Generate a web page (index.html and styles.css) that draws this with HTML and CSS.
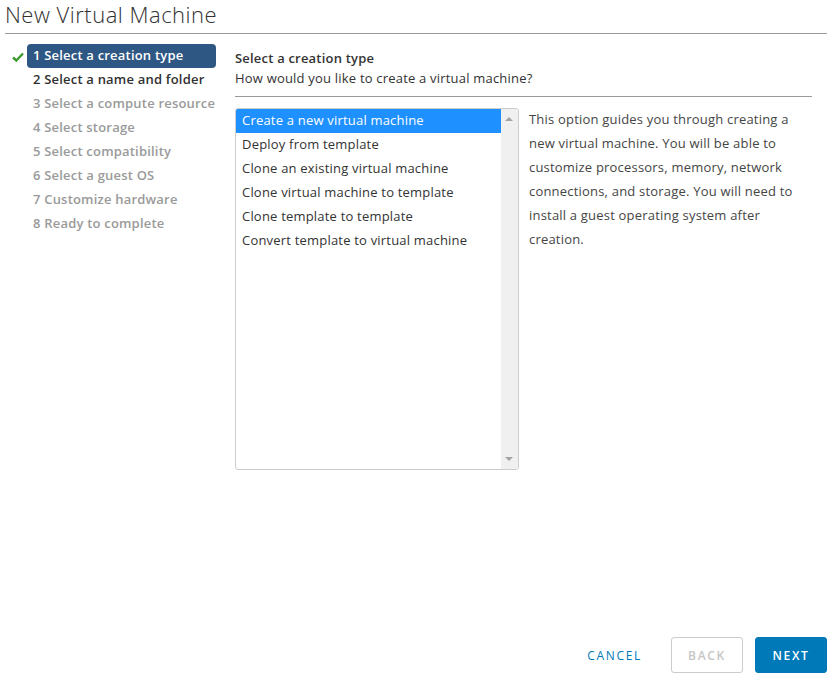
FILE: index.html
```html
<!DOCTYPE html>
<html>
<head>
<meta charset="utf-8">
<link rel="stylesheet" href="styles.css">
</head>
<body>
<div class="dialog">
  <h1 class="title">New Virtual Machine</h1>
  <div class="main">
    <ul class="steps">
      <li class="step done active"><span class="check"><svg width="12" height="10" viewBox="0 0 12 10"><path d="M1 5.5 L4.3 8.5 L11 1.5" fill="none" stroke="#3c9a2e" stroke-width="2.4"/></svg></span><span class="label">1 Select a creation type</span></li>
      <li class="step enabled"><span class="check"></span><span class="label">2 Select a name and folder</span></li>
      <li class="step"><span class="check"></span><span class="label">3 Select a compute resource</span></li>
      <li class="step"><span class="check"></span><span class="label">4 Select storage</span></li>
      <li class="step"><span class="check"></span><span class="label">5 Select compatibility</span></li>
      <li class="step"><span class="check"></span><span class="label">6 Select a guest OS</span></li>
      <li class="step"><span class="check"></span><span class="label">7 Customize hardware</span></li>
      <li class="step"><span class="check"></span><span class="label">8 Ready to complete</span></li>
    </ul>
    <div class="content">
      <div class="header">
        <div class="h-title">Select a creation type</div>
        <div class="h-sub">How would you like to create a virtual machine?</div>
      </div>
      <div class="body">
        <div class="listbox">
          <ul class="options">
            <li class="opt selected">Create a new virtual machine</li>
            <li class="opt">Deploy from template</li>
            <li class="opt">Clone an existing virtual machine</li>
            <li class="opt">Clone virtual machine to template</li>
            <li class="opt">Clone template to template</li>
            <li class="opt">Convert template to virtual machine</li>
          </ul>
          <div class="scrollbar">
            <span class="arrow up"></span>
            <span class="arrow down"></span>
          </div>
        </div>
        <p class="desc">This option guides you through creating a new virtual machine. You will be able to customize processors, memory, network connections, and storage. You will need to install a guest operating system after creation.</p>
      </div>
    </div>
  </div>
  <div class="footer">
    <button class="btn link">CANCEL</button>
    <button class="btn outline" disabled>BACK</button>
    <button class="btn primary">NEXT</button>
  </div>
</div>
</body>
</html>
```
FILE: styles.css
```css
* { box-sizing: border-box; }
html, body { margin: 0; padding: 0; background: #fff; }
body {
  font-family: "Open Sans", "Lato", sans-serif;
  color: #333;
  width: 833px;
  height: 681px;
  overflow: hidden;
  letter-spacing: 0.2px;
}
.dialog {
  height: 681px;
  display: flex;
  flex-direction: column;
  padding: 0 6px 8px 5px;
}
.title {
  margin: 0;
  font-size: 22px;
  font-weight: 300;
  letter-spacing: 0.5px;
  color: #313131;
  line-height: 28px;
  height: 34px;
  border-bottom: 1px solid #9a9a9a;
}
.main {
  flex: 1;
  display: flex;
  padding-top: 10px;
}
.steps {
  list-style: none;
  margin: 0;
  padding: 0;
  width: 230px;
  flex: none;
}
.step {
  display: flex;
  align-items: center;
  height: 24px;
  font-size: 13px;
  font-weight: 600;
  color: #9a9a9a;
}
.step .check {
  width: 22px;
  display: flex;
  justify-content: flex-end;
  padding-right: 3px;
  padding-top: 1px;
}
.step .label {
  padding: 0 6px 2px;
  height: 24px;
  line-height: 22px;
  border-radius: 4px;
  white-space: nowrap;
}
.step.enabled { color: #313131; }
.step.active .label {
  background: #2f5783;
  color: #fff;
  width: 189px;
}
.content {
  flex: 1;
  padding-right: 15px;
}
.header {
  border-bottom: 1px solid #9a9a9a;
  padding-top: 4px;
  height: 53px;
}
.h-title {
  font-size: 13px;
  font-weight: 600;
  color: #333;
  line-height: 20px;
}
.h-sub {
  font-size: 13px;
  color: #333;
  line-height: 20px;
}
.body {
  display: flex;
  padding-top: 11px;
}
.listbox {
  width: 284px;
  height: 362px;
  border: 1px solid #ccc;
  border-radius: 3px;
  display: flex;
  overflow: hidden;
  flex: none;
}
.options {
  list-style: none;
  margin: 0;
  padding: 0;
  flex: 1;
}
.opt {
  height: 24px;
  line-height: 22px;
  padding: 0 0 2px 6px;
  font-size: 13px;
  color: #333;
  white-space: nowrap;
}
.opt.selected {
  background: #1e90ff;
  color: #fff;
}
.scrollbar {
  width: 17px;
  background: #f0f0f0;
  position: relative;
  flex: none;
}
.arrow {
  position: absolute;
  left: 4px;
  width: 0;
  height: 0;
  border-left: 4px solid transparent;
  border-right: 4px solid transparent;
}
.arrow.up { top: 8px; border-bottom: 4px solid #a3a3a3; }
.arrow.down { bottom: 8px; border-top: 4px solid #a3a3a3; }
.desc {
  margin: -1px 0 0 10px;
  font-size: 13px;
  line-height: 24px;
  color: #454545;
  width: 276px;
}
.footer {
  display: flex;
  justify-content: flex-end;
  align-items: center;
  gap: 12px;
}
.btn {
  font-family: inherit;
  font-size: 12px;
  font-weight: 600;
  letter-spacing: 0.14em;
  height: 36px;
  border-radius: 3px;
  padding: 0 15px;
  cursor: pointer;
}
.btn.link {
  background: none;
  border: none;
  color: #0079b8;
  font-weight: 500;
  margin-right: 2px;
}
.btn.outline {
  background: #fff;
  border: 1px solid #ccc;
  color: #c6c6c6;
  width: 72px;
}
.btn.primary {
  background: #0079b8;
  border: 1px solid #0079b8;
  color: #fff;
  width: 72px;
}
```
